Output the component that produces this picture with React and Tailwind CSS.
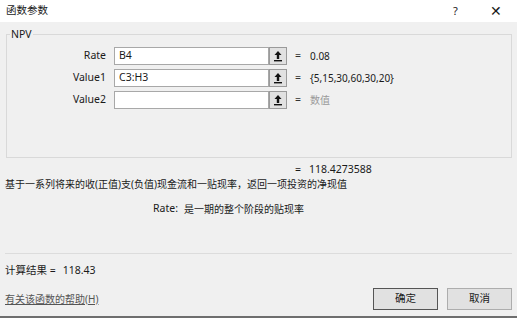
import React from "react";

const font = { fontFamily: '"Noto Sans", "Noto Sans CJK SC", sans-serif' };

function RefButton() {
  return (
    <div className="w-[18px] h-[18px] bg-[#e1e1e1] border border-[#9a9a9a] flex items-center justify-center">
      <svg width="10" height="12" viewBox="0 0 10 12">
        <path d="M5 1 L8.5 5 L6.2 5 L6.2 9 L3.8 9 L3.8 5 L1.5 5 Z" fill="#111" />
        <rect x="1" y="10" width="8" height="1.4" fill="#111" />
      </svg>
    </div>
  );
}

function Row({ label, value, result, muted }) {
  return (
    <div className="flex items-center h-[18px]">
      <div className="w-[107px] pr-[8px] text-right text-[10.5px] text-[#1a1a1a]">{label}</div>
      <div className="w-[155px] h-[18px] bg-white border border-[#a8a8a8] flex items-center pl-[4px] text-[10.5px] text-[#1a1a1a]">
        {value}
      </div>
      <RefButton />
      <div className="ml-[8px] w-[15px] text-[10.5px] text-[#333]">=</div>
      <div className={"text-[10px] " + (muted ? "text-[#9a9a9a]" : "text-[#1a1a1a]")}>{result}</div>
    </div>
  );
}

export default function App() {
  return (
    <div className="w-[517px] h-[318px] bg-[#f0f0f0] flex flex-col overflow-hidden" style={font}>
      <div className="h-[22px] bg-white flex items-center pl-[6px] text-[10.5px] text-[#1a1a1a] shrink-0">
        <span>函数参数</span>
        <span className="ml-auto w-[10px] text-[11px]">?</span>
        <span className="ml-[27px] mr-[15px] text-[14px] leading-none font-light">✕</span>
      </div>
      <div className="flex-1 flex flex-col px-[5px]">
        <div className="mt-[12px] h-[124px] border border-[#d9d9d9] ml-[1px] flex flex-col">
          <div className="-mt-[8px] ml-[3px] px-[1px] bg-[#f0f0f0] self-start text-[10.5px] leading-[14px] text-[#1a1a1a]">NPV</div>
          <div className="mt-[6px] flex flex-col gap-[4px]">
            <Row label="Rate" value="B4" result="0.08" />
            <Row label="Value1" value="C3:H3" result="{5,15,30,60,30,20}" />
            <Row label="Value2" value="" result="数值" muted />
          </div>
        </div>
        <div className="mt-[5px] h-[14px] flex items-center text-[10.5px] text-[#1a1a1a]">
          <span className="ml-[290px] w-[14px]">=</span>
          <span>118.4273588</span>
        </div>
        <div className="h-[14px] flex items-center text-[10px] text-[#1a1a1a] whitespace-nowrap">
          基于一系列将来的收(正值)支(负值)现金流和一贴现率，返回一项投资的净现值
        </div>
        <div className="mt-[11px] h-[14px] flex items-center text-[10px] text-[#1a1a1a]">
          <span className="ml-[148px] w-[31px] text-[10.5px]">Rate:</span>
          <span>是一期的整个阶段的贴现率</span>
        </div>
        <div className="mt-[37px] h-px bg-[#dcdcdc]" />
        <div className="mt-[9px] h-[16px] flex items-center text-[10.5px] text-[#1a1a1a]">
          <span>计算结果 =</span>
          <span className="ml-[7px]">118.43</span>
        </div>
        <div className="mt-[9px] flex items-center">
          <span className="text-[10px] text-[#555] underline">有关该函数的帮助(H)</span>
          <div className="ml-auto flex gap-[9px]">
            <button className="w-[65px] h-[22px] bg-[#e1e1e1] border border-[#555] text-[10.5px] text-[#1a1a1a]">确定</button>
            <button className="w-[65px] h-[22px] bg-[#e1e1e1] border border-[#adadad] text-[10.5px] text-[#1a1a1a]">取消</button>
          </div>
        </div>
      </div>
      <div className="h-[2px] bg-[#6e6e6e] shrink-0" />
    </div>
  );
}
